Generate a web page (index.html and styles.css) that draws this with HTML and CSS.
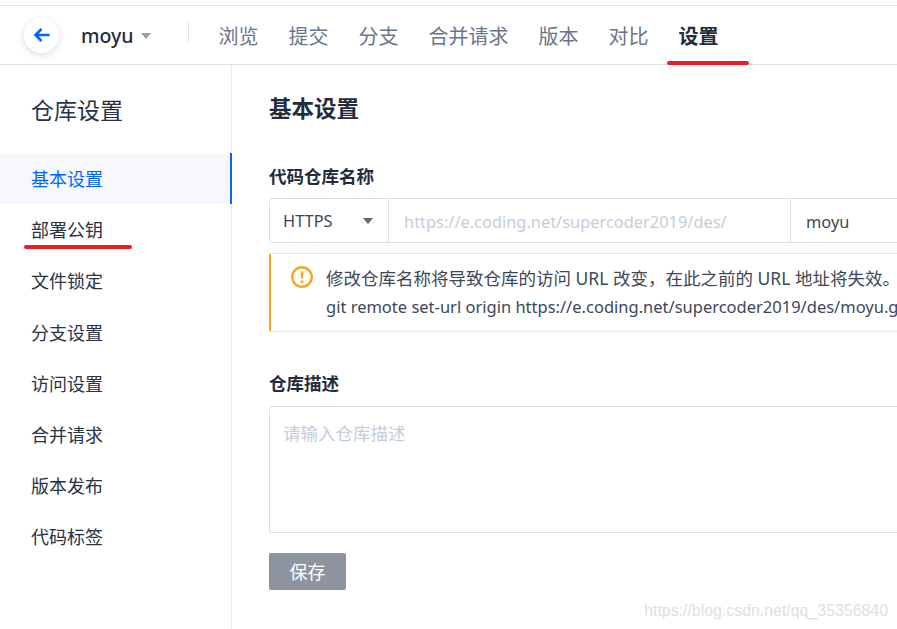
FILE: index.html
```html
<!DOCTYPE html>
<html lang="zh-CN">
<head>
    <meta charset="UTF-8">
    <meta name="viewport" content="width=device-width, initial-scale=1.0">
    <title>仓库设置</title>
    <link rel="stylesheet" href="styles.css">
</head>
<body>
    <header class="topbar">
        <div class="back-btn">
            <svg width="18" height="16" viewBox="0 0 18 16"><path d="M16.5 8H2.5M8.5 2L2.5 8l6 6" fill="none" stroke="#0066ff" stroke-width="2.6"/></svg>
        </div>
        <div class="repo-name">moyu</div>
        <div class="caret"></div>
        <div class="nav-divider"></div>
        <nav class="nav">
            <a>浏览</a>
            <a>提交</a>
            <a>分支</a>
            <a>合并请求</a>
            <a>版本</a>
            <a>对比</a>
            <a class="active">设置</a>
        </nav>
        <div class="mark mark-nav"></div>
    </header>
    <div class="page">
        <aside class="sidebar">
            <div class="sidebar-title">仓库设置</div>
            <ul class="side-menu">
                <li class="active">基本设置</li>
                <li class="marked">部署公钥<span class="mark mark-side"></span></li>
                <li>文件锁定</li>
                <li>分支设置</li>
                <li>访问设置</li>
                <li>合并请求</li>
                <li>版本发布</li>
                <li>代码标签</li>
            </ul>
        </aside>
        <main class="content">
            <h1>基本设置</h1>
            <div class="form-group">
                <label>代码仓库名称</label>
                <div class="input-group">
                    <div class="select">HTTPS<span class="select-caret"></span></div>
                    <div class="prefix">https://e.coding.net/supercoder2019/des/</div>
                    <div class="name-input">moyu</div>
                </div>
            </div>
            <div class="alert">
                <svg class="alert-icon" width="24" height="24" viewBox="0 0 24 24"><circle cx="12" cy="12" r="9.8" fill="none" stroke="#f5a623" stroke-width="2.4"/><path d="M12 6.5v7" stroke="#f5a623" stroke-width="2.4"/><circle cx="12" cy="16.8" r="1.5" fill="#f5a623"/></svg>
                <div class="alert-text">
                    <div>修改仓库名称将导致仓库的访问 URL 改变，在此之前的 URL 地址将失效。</div>
                    <div class="alert-cmd">git remote set-url origin https://e.coding.net/supercoder2019/des/moyu.git</div>
                </div>
            </div>
            <div class="form-group desc-group">
                <label>仓库描述</label>
                <div class="textarea">请输入仓库描述</div>
            </div>
            <button type="button">保存</button>
        </main>
    </div>
    <div class="watermark">https://blog.csdn.net/qq_35356840</div>
</body>
</html>
```

FILE: styles.css
```css
* {
    box-sizing: border-box;
}
html, body {
    height: 100%;
}
body {
    font-family: "Noto Sans", "Noto Sans CJK SC", sans-serif;
    margin: 0;
    padding-top: 5px;
    background-color: #fff;
    color: #2a3245;
    overflow: hidden;
    position: relative;
}
.topbar {
    position: relative;
    display: flex;
    align-items: center;
    height: 60px;
    padding-left: 24px;
    border-top: 1px solid #e1e3ea;
    border-bottom: 1px solid #e1e3ea;
}
.back-btn {
    display: flex;
    align-items: center;
    justify-content: center;
    width: 35px;
    height: 35px;
    border-radius: 50%;
    background: #fff;
    box-shadow: 0 2px 7px rgba(30, 40, 70, 0.16);
}
.repo-name {
    margin-left: 22px;
    padding-top: 2px;
    font-size: 19.5px;
    font-weight: 500;
    color: #232b3d;
    line-height: 28px;
}
.caret {
    margin-left: 7px;
    margin-top: 2px;
    border-left: 5.5px solid transparent;
    border-right: 5.5px solid transparent;
    border-top: 6px solid #9a9fa9;
}
.nav-divider {
    width: 1px;
    height: 20px;
    margin: 0 10px 6px 37px;
    background: #dfe2e8;
}
.nav {
    display: flex;
    gap: 30px;
    margin-left: 20px;
    font-size: 20px;
    color: #69758c;
}
.nav a.active {
    color: #232b3d;
    font-weight: 700;
}
.mark {
    position: absolute;
    height: 4px;
    border-radius: 2px;
    background: #ed1c24;
}
.mark-nav {
    left: 667px;
    bottom: -1px;
    width: 82px;
}
.page {
    display: flex;
    height: 564px;
}
.sidebar {
    width: 232px;
    flex-shrink: 0;
    border-right: 1px solid #e8eaee;
}
.sidebar-title {
    padding: 28px 0 0 31px;
    height: 88px;
    font-size: 23px;
    line-height: 34px;
    color: #2a3245;
}
.side-menu {
    list-style: none;
    margin: 0;
    padding: 0;
}
.side-menu li {
    position: relative;
    height: 51.2px;
    padding-left: 31px;
    font-size: 18px;
    line-height: 52px;
    color: #2a3245;
}
.side-menu li.active {
    margin-right: -1px;
    color: #0066ff;
    background: #f6f8fb;
    border-right: 2px solid #0066ff;
}
.mark-side {
    left: 24px;
    top: 41px;
    width: 108px;
}
.content {
    flex: 1;
    min-width: 0;
    padding: 26px 0 0 37px;
}
h1 {
    margin: 0;
    font-size: 22.5px;
    font-weight: 700;
    line-height: 36px;
    color: #232b3d;
}
.form-group {
    width: 720px;
}
.form-group label {
    display: block;
    margin-top: 36px;
    font-size: 17.5px;
    font-weight: 700;
    line-height: 26px;
    color: #232b3d;
}
.input-group {
    display: flex;
    height: 45px;
    margin-top: 9px;
    font-size: 16.4px;
    line-height: 45px;
    border: 1px solid #dadfe8;
    border-radius: 3px;
}
.select {
    display: flex;
    align-items: center;
    justify-content: space-between;
    width: 119px;
    padding: 0 15px 0 13px;
    color: #3d4759;
    border-right: 1px solid #dadfe8;
}
.select-caret {
    border-left: 5.5px solid transparent;
    border-right: 5.5px solid transparent;
    border-top: 6px solid #5d6779;
}
.prefix {
    width: 402px;
    padding-left: 15px;
    color: #c5cdda;
    background: #fff;
    border-right: 1px solid #dadfe8;
}
.name-input {
    flex: 1;
    padding-left: 15px;
    color: #3d4759;
}
.alert {
    display: flex;
    width: 720px;
    height: 79px;
    margin-top: 10px;
    padding: 11px 0 0 19px;
    border: 1px solid #e3e6ec;
    border-left: 2px solid #f5a623;
    border-radius: 2px;
}
.alert-icon {
    flex-shrink: 0;
}
.alert-text {
    margin-left: 12px;
    margin-top: -1px;
    font-size: 17.5px;
    line-height: 29px;
    white-space: nowrap;
    color: #3d4759;
}
.alert-cmd {
    margin-top: -1px;
    font-size: 16.5px;
}
.desc-group label {
    margin-top: 38px;
}
.textarea {
    height: 127px;
    margin-top: 10px;
    padding: 12px 13px;
    font-size: 17.5px;
    line-height: 29px;
    color: #c5cdda;
    border: 1px solid #dadfe8;
    border-radius: 3px;
}
button {
    display: block;
    width: 77px;
    height: 37px;
    margin-top: 20px;
    padding: 0 0 2px;
    font-family: inherit;
    font-size: 18px;
    color: #fff;
    background-color: #8d949f;
    border: none;
    border-radius: 2px;
}
.watermark {
    position: absolute;
    right: 9px;
    bottom: 8px;
    font-family: "Liberation Sans", sans-serif;
    font-size: 15.9px;
    line-height: 20px;
    color: #e0e0e0;
}
```
